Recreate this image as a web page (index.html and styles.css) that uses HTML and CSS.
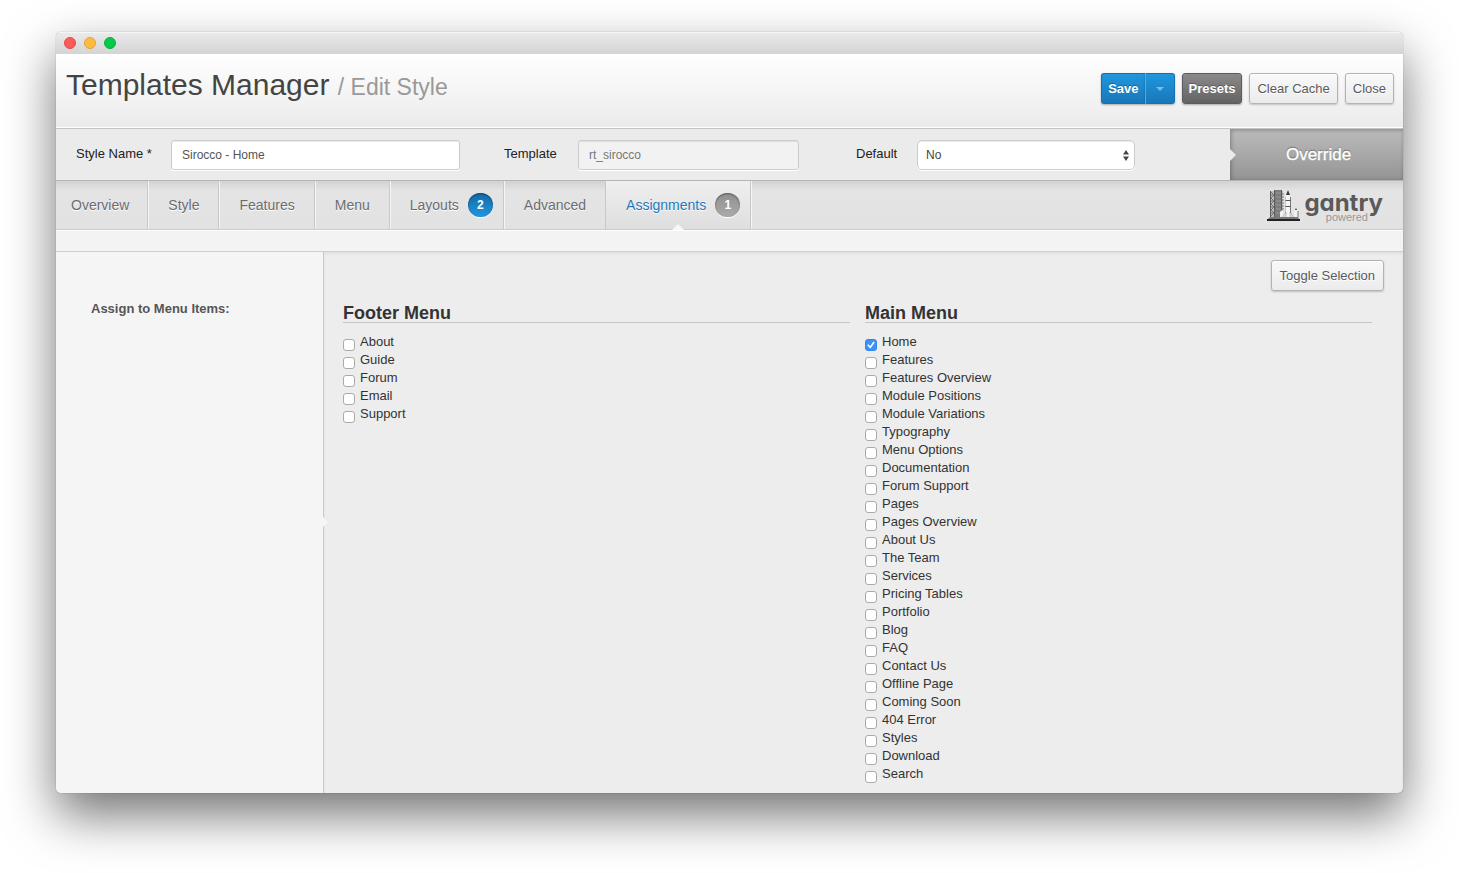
FILE: index.html
```html
<!DOCTYPE html>
<html lang="en">
<head>
<meta charset="utf-8">
<title>Templates Manager / Edit Style</title>
<link rel="stylesheet" href="styles.css">
</head>
<body>
<div class="window">
  <div class="titlebar">
    <span class="light light-red"></span>
    <span class="light light-yellow"></span>
    <span class="light light-green"></span>
  </div>

  <header class="header">
    <h1 class="title">Templates Manager <small class="subtitle">/ Edit Style</small></h1>
    <div class="actions">
      <div class="split">
        <button class="btn btn-blue split-main" type="button">Save</button>
        <button class="btn btn-blue split-toggle" type="button" aria-label="More save options"><span class="caret"></span></button>
      </div>
      <button class="btn btn-dark" type="button">Presets</button>
      <button class="btn" type="button">Clear Cache</button>
      <button class="btn" type="button">Close</button>
    </div>
  </header>

  <form class="details">
    <div class="fields">
      <div class="field field-name">
        <label for="style-name">Style Name *</label>
        <input class="control" id="style-name" type="text" value="Sirocco - Home">
      </div>
      <div class="field field-template">
        <label for="template">Template</label>
        <input class="control control-readonly" id="template" type="text" value="rt_sirocco" readonly>
      </div>
      <div class="field field-default">
        <label for="default">Default</label>
        <div class="select">
          <select class="control" id="default"><option>No</option><option>All</option></select>
          <svg class="select-arrows" width="6" height="11" viewBox="0 0 6 11"><path d="M3 0L6 4.5H0zM3 11L0 6.500H6z" fill="#444"/></svg>
        </div>
      </div>
    </div>
    <div class="override">Override</div>
  </form>

  <nav class="tabs">
    <a class="tab" href="#overview">Overview</a>
    <a class="tab" href="#style">Style</a>
    <a class="tab" href="#features">Features</a>
    <a class="tab" href="#menu">Menu</a>
    <a class="tab tab-badged" href="#layouts">Layouts <span class="badge badge-blue">2</span></a>
    <a class="tab" href="#advanced">Advanced</a>
    <a class="tab tab-badged tab-active" href="#assignments">Assignments <span class="badge">1</span></a>
    <div class="brand">
      <svg class="brand-icon" width="33" height="33" viewBox="0 0 33 33">
        <rect x="3" y="2" width="13" height="26" fill="#bdbdbd"/>
        <rect x="8" y="1" width="6" height="27" fill="#7c7c7c"/>
        <path d="M3.500 2v26M7.500 1v27M14.500 1v27" stroke="#5c5c5c"/>
        <path d="M16 4v24" stroke="#777" stroke-dasharray="2 1"/>
        <path d="M4 3l3 3-3 3 3 3-3 3 3 3-3 3 3 3-3 3M4 6h3M4 12h3M4 18h3M4 24h3" stroke="#777" fill="none"/>
        <path d="M9 4h5M9 8h5M9 12h5M9 16h5M9 20h5M9 24h5" stroke="#999"/>
        <path d="M13 29v-6l2-2 2 2v6z" fill="#f0f0f0"/>
        <path d="M18.500 29V8l2.500-6 2.500 6v21z" fill="#f6f6f6"/>
        <path d="M19 6l2-5 2 5z" fill="#3c3c3c"/>
        <path d="M23.500 8v20" stroke="#777"/>
        <path d="M18.500 8v20" stroke="#aaa" stroke-width=".6"/>
        <path d="M18.500 11.500h5M18.500 17.500h5" stroke="#555"/>
        <path d="M15 29l4-6v6zM23 23l4 6h-4z" fill="#e4e4e4" stroke="#888" stroke-width=".5"/>
        <path d="M27 29v-7l2-2 2 2v7z" fill="#f2f2f2"/>
        <path d="M31 22v6" stroke="#777"/>
        <path d="M28 21l1-2 1 2z" fill="#333"/>
        <path d="M3 28h28l1 2H1z" fill="#777"/>
        <path d="M0 30h33v2H0z" fill="#222"/>
      </svg>
      <div class="brand-text">
        <span class="brand-name">gantry</span>
        <span class="brand-tag">powered</span>
      </div>
    </div>
  </nav>
  <div class="strip"></div>

  <div class="content">
    <aside class="sidebar">Assign to Menu Items:</aside>
    <main class="main">
      <div class="toolbar"><button class="btn" type="button">Toggle Selection</button></div>
      <div class="menus">
        <section class="menu">
          <h2 class="menu-title">Footer Menu</h2>
          <label class="item"><input class="check" type="checkbox">About</label>
          <label class="item"><input class="check" type="checkbox">Guide</label>
          <label class="item"><input class="check" type="checkbox">Forum</label>
          <label class="item"><input class="check" type="checkbox">Email</label>
          <label class="item"><input class="check" type="checkbox">Support</label>
        </section>
        <section class="menu">
          <h2 class="menu-title">Main Menu</h2>
          <label class="item"><input class="check" type="checkbox" checked>Home</label>
          <label class="item"><input class="check" type="checkbox">Features</label>
          <label class="item"><input class="check" type="checkbox">Features Overview</label>
          <label class="item"><input class="check" type="checkbox">Module Positions</label>
          <label class="item"><input class="check" type="checkbox">Module Variations</label>
          <label class="item"><input class="check" type="checkbox">Typography</label>
          <label class="item"><input class="check" type="checkbox">Menu Options</label>
          <label class="item"><input class="check" type="checkbox">Documentation</label>
          <label class="item"><input class="check" type="checkbox">Forum Support</label>
          <label class="item"><input class="check" type="checkbox">Pages</label>
          <label class="item"><input class="check" type="checkbox">Pages Overview</label>
          <label class="item"><input class="check" type="checkbox">About Us</label>
          <label class="item"><input class="check" type="checkbox">The Team</label>
          <label class="item"><input class="check" type="checkbox">Services</label>
          <label class="item"><input class="check" type="checkbox">Pricing Tables</label>
          <label class="item"><input class="check" type="checkbox">Portfolio</label>
          <label class="item"><input class="check" type="checkbox">Blog</label>
          <label class="item"><input class="check" type="checkbox">FAQ</label>
          <label class="item"><input class="check" type="checkbox">Contact Us</label>
          <label class="item"><input class="check" type="checkbox">Offline Page</label>
          <label class="item"><input class="check" type="checkbox">Coming Soon</label>
          <label class="item"><input class="check" type="checkbox">404 Error</label>
          <label class="item"><input class="check" type="checkbox">Styles</label>
          <label class="item"><input class="check" type="checkbox">Download</label>
          <label class="item"><input class="check" type="checkbox">Search</label>
        </section>
      </div>
    </main>
  </div>
</div>
</body>
</html>
```
FILE: styles.css
```css
* { box-sizing: border-box; }

body {
  margin: 0;
  padding: 32px 56px 80px;
  background: #fff;
  color: #333;
  font: 13px/18px "Liberation Sans", Arial, sans-serif;
}

.window {
  border-radius: 5px;
  overflow: hidden;
  background: #ededed;
  box-shadow: 0 0 1px rgba(0, 0, 0, .5), 0 22px 50px rgba(0, 0, 0, .55);
}

.titlebar {
  display: flex;
  align-items: center;
  gap: 8px;
  height: 22px;
  padding: 0 8px;
  background: linear-gradient(#ebebeb, #d4d4d4);
  box-shadow: inset 0 1px #f5f5f5;
}
.light { width: 12px; height: 12px; border-radius: 50%; border: 1px solid; }
.light-red { background: #fc5b57; border-color: #e2494a; }
.light-yellow { background: #fdbc40; border-color: #e0a03a; }
.light-green { background: #06c94b; border-color: #09ad3e; }

.header {
  display: flex;
  justify-content: space-between;
  align-items: flex-start;
  height: 74px;
  padding: 12px 9px 0 10px;
  background: linear-gradient(#fff, #ebebeb);
  border-bottom: 1px solid #fff;
}
.title { margin: 0; font-size: 30px; line-height: 38px; font-weight: 400; color: #444; }
.subtitle { font-size: 23px; color: #999; }
.actions { display: flex; gap: 7px; padding-top: 7px; }
.split { display: flex; }

.btn {
  height: 31px;
  padding: 0 7px;
  border: 1px solid #b3b3b3;
  border-radius: 3px;
  background: linear-gradient(#f9f9f9, #ebebeb);
  box-shadow: 0 1px 2px rgba(0, 0, 0, .2), inset 0 1px #fff;
  color: #5a5a5f;
  font: inherit;
  text-shadow: 0 1px #fff;
}
.btn-blue, .btn-dark {
  padding: 0 6px;
  color: #fff;
  font-weight: 700;
  text-shadow: 0 -1px rgba(0, 0, 0, .3);
}
.btn-blue {
  border-color: #1471ae;
  background: linear-gradient(#2196de, #1878b8);
  box-shadow: 0 1px 2px rgba(0, 0, 0, .3);
}
.btn-dark {
  border-color: #5c5c5c;
  background: linear-gradient(#8a8a8a, #636363);
  box-shadow: 0 1px 2px rgba(0, 0, 0, .3);
}
.split-main { border-right: 0; border-radius: 3px 0 0 3px; }
.split-toggle { width: 30px; border-left-color: #50abe0; border-radius: 0 3px 3px 0; }
.caret {
  display: inline-block;
  border: 4px solid transparent;
  border-top-color: #75bfea;
  border-bottom: 0;
  vertical-align: middle;
}

.details {
  display: flex;
  height: 53px;
  border-top: 1px solid #c4c4c4;
  border-bottom: 1px solid #b5b5b5;
  background: #ebebeb;
}
.fields { display: flex; flex: 1; align-items: center; padding-left: 20px; }
.field { display: flex; align-items: center; color: #222; }
.field label { padding-bottom: 2px; }
.field-name { flex: 384; margin-right: 44px; }
.field-name label { width: 95px; }
.field-template { flex: 295; margin-right: 57px; }
.field-template label { width: 74px; }
.field-default { flex: 279; margin-right: 95px; }
.field-default label { width: 61px; }
.select { position: relative; flex: 1; }
.control {
  flex: 1;
  min-width: 0;
  width: 100%;
  height: 30px;
  padding: 0 10px;
  border: 1px solid #ccc;
  border-radius: 3px;
  background: #fff;
  box-shadow: inset 0 1px 1px rgba(0, 0, 0, .08), 0 1px #fff;
  color: #555;
  font: 12px/18px "Liberation Sans", Arial, sans-serif;
}
.control-readonly { background: #f2f2f2; color: #777; }
select.control { display: block; appearance: none; padding: 0 8px; border-radius: 5px; color: #444; }
.select-arrows { position: absolute; right: 6px; top: 10px; pointer-events: none; }

.override {
  position: relative;
  display: flex;
  align-items: center;
  justify-content: center;
  width: 173px;
  padding-left: 4px;
  background: linear-gradient(#bcbcbc, #949494);
  box-shadow: inset 1px 1px 4px rgba(0, 0, 0, .3);
  color: #fff;
  font-size: 17px;
  -webkit-text-stroke: 0.4px #fff;
  text-shadow: 0 -1px 1px rgba(0, 0, 0, .5);
}
.override::before {
  content: "";
  position: absolute;
  left: 0;
  top: 20px;
  border: 6px solid transparent;
  border-left-color: #ebebeb;
  border-right: 0;
}

.tabs {
  display: flex;
  height: 49px;
  background: linear-gradient(#d2d2d2, #e4e4e4 10px, #e2e2e2);
  border-bottom: 1px solid #cbcbcb;
}
.tab {
  position: relative;
  display: flex;
  align-items: center;
  gap: 9px;
  padding: 0 19px 0 20px;
  border-right: 1px solid #c8c8c8;
  box-shadow: 1px 0 #f5f5f5;
  color: #6b6b70;
  font-size: 14px;
  text-decoration: none;
  text-shadow: 0 1px #fff;
}
.tab:first-child { padding: 0 18px 0 15px; }
.tab-badged { padding-right: 10px; }
.tab-active {
  background: linear-gradient(#efefef, #dedede);
  color: #1f78bd;
}
.tab-active::after {
  content: "";
  position: absolute;
  left: 50%;
  bottom: -1px;
  margin-left: -6px;
  border: 6px solid transparent;
  border-bottom-color: #f8f8f8;
  border-top: 0;
}
.badge {
  width: 25px;
  height: 24px;
  border-radius: 12px;
  background: linear-gradient(#909090, #aaa);
  box-shadow: inset 0 1px 2px rgba(0, 0, 0, .4), 0 1px #fff;
  color: #fff;
  font: 700 12px/24px "Liberation Sans", Arial, sans-serif;
  text-align: center;
  text-shadow: none;
}
.badge-blue { background: linear-gradient(#136ba8, #2196de); }

.brand { display: flex; gap: 4px; margin-left: auto; padding: 8px 20px 0 0; }
.brand-text { display: flex; flex-direction: column; align-items: flex-end; }
.brand-name {
  color: #5a5a5a;
  font: 700 24px/28px Inter, "Liberation Sans", sans-serif;
  font-feature-settings: "cv11";
}
.brand-tag {
  margin: -7px 15px 0 0;
  color: #999;
  font-size: 11px;
  line-height: 14px;
}

.strip {
  height: 22px;
  background: #f3f3f3;
  border-top: 1px solid #fff;
  border-bottom: 1px solid #cfcfcf;
}

.content { display: flex; }
.sidebar {
  position: relative;
  width: 268px;
  padding: 48px 20px 0 35px;
  border-right: 1px solid #c9c9c9;
  background: #f5f5f5;
  color: #555;
  font-weight: 700;
}
.sidebar::after {
  content: "";
  position: absolute;
  right: -5px;
  top: 50%;
  margin-top: -6px;
  border: 5px solid transparent;
  border-left-color: #f5f5f5;
  border-right: 0;
}
.main {
  flex: 1;
  padding: 8px 19px 10px;
  box-shadow: inset 0 2px 3px rgba(0, 0, 0, .05);
}
.toolbar { display: flex; justify-content: flex-end; }
.toolbar .btn { padding: 0 8px; }
.menus {
  display: grid;
  grid-template-columns: 1fr 1fr;
  gap: 15px;
  padding: 14px 12px 0 0;
}
.menu-title {
  margin: 0 0 10px;
  border-bottom: 1px solid #c6c6c6;
  font-size: 18px;
  line-height: 17px;
}
.item { display: flex; align-items: flex-start; gap: 5px; width: fit-content; height: 18px; }
.check {
  appearance: none;
  width: 12px;
  height: 12px;
  margin: 6px 0 0;
  border: 1px solid #aaa;
  border-radius: 3px;
  background: #fff;
}
.check:checked { border-color: #2f86ea; background: #3b94f5; }
.check:checked::before {
  content: "";
  display: block;
  height: 10px;
  background: #fff;
  clip-path: polygon(12% 52%, 24% 42%, 42% 62%, 74% 14%, 88% 24%, 44% 86%);
}
```
